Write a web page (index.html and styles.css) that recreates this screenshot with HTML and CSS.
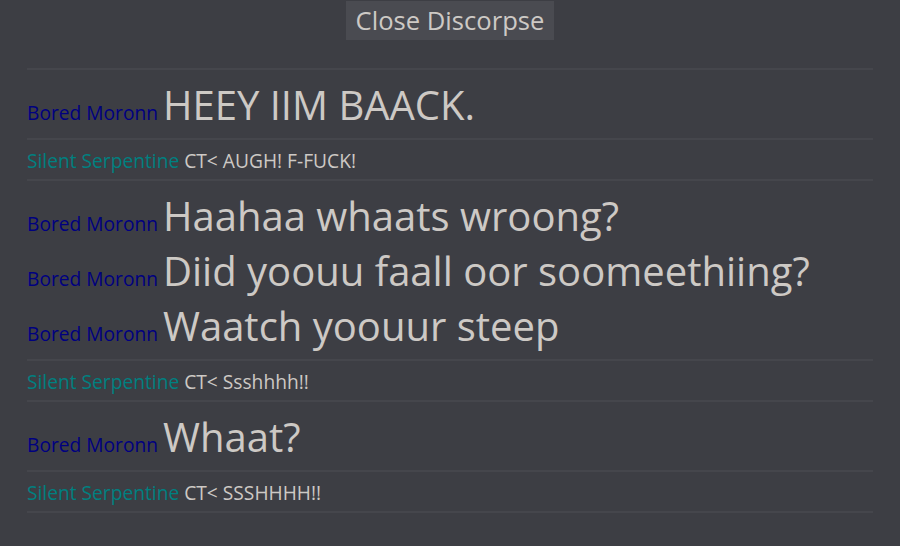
FILE: index.html
```html
<!DOCTYPE html>
<html>
<head>
  <title>Discorpse</title>
  <link rel="stylesheet" href="styles.css">
</head>
<body>
  <div class="top-bar">
    <button class="close-button" type="button">Close Discorpse</button>
  </div>

  <div class="chat-log">
    <div class="message-group">
      <div class="message"><span class="name bored">Bored Moronn</span> <span class="text big">HEEY IIM BAACK.</span></div>
    </div>
    <div class="message-group small">
      <div class="message"><span class="name silent">Silent Serpentine</span> <span class="text">CT&lt; AUGH! F-FUCK!</span></div>
    </div>
    <div class="message-group">
      <div class="message"><span class="name bored">Bored Moronn</span> <span class="text big">Haahaa whaats wroong?</span></div>
      <div class="message"><span class="name bored">Bored Moronn</span> <span class="text big">Diid yoouu faall oor soomeethiing?</span></div>
      <div class="message"><span class="name bored">Bored Moronn</span> <span class="text big">Waatch yoouur steep</span></div>
    </div>
    <div class="message-group small">
      <div class="message"><span class="name silent">Silent Serpentine</span> <span class="text">CT&lt; Ssshhhh!!</span></div>
    </div>
    <div class="message-group">
      <div class="message"><span class="name bored">Bored Moronn</span> <span class="text big">Whaat?</span></div>
    </div>
    <div class="message-group small">
      <div class="message"><span class="name silent">Silent Serpentine</span> <span class="text">CT&lt; SSSHHHH!!</span></div>
    </div>
  </div>
</body>
</html>
```

FILE: styles.css
```css
/* page */
body {
  font-family: "Open Sans", "Liberation Sans", sans-serif;
  margin: 0;
  padding: 0 27px;
  background-color: #3d3e44;
  color: #cdc9c5;
}

.top-bar {
  text-align: center;
  padding-top: 1px;
  margin-bottom: 28px;
}

.close-button {
  font-family: "Open Sans", "Liberation Sans", sans-serif;
  font-size: 25.6px;
  line-height: 35px;
  padding: 2px 10px;
  background-color: #4a4b51;
  color: #cdc9c5;
  border: none;
  cursor: pointer;
}

/* chat */
.chat-log {
  border-top: 2px solid #45464c;
}

.message-group {
  padding: 7px 0 6px;
  border-bottom: 2px solid #45464c;
}

.message-group.small {
  padding-bottom: 5px;
}

.message {
  font-size: 19.2px;
}

.name.bored {
  color: #000080;
}

.name.silent {
  color: #008080;
}

.text.big {
  font-size: 40px;
}
```
